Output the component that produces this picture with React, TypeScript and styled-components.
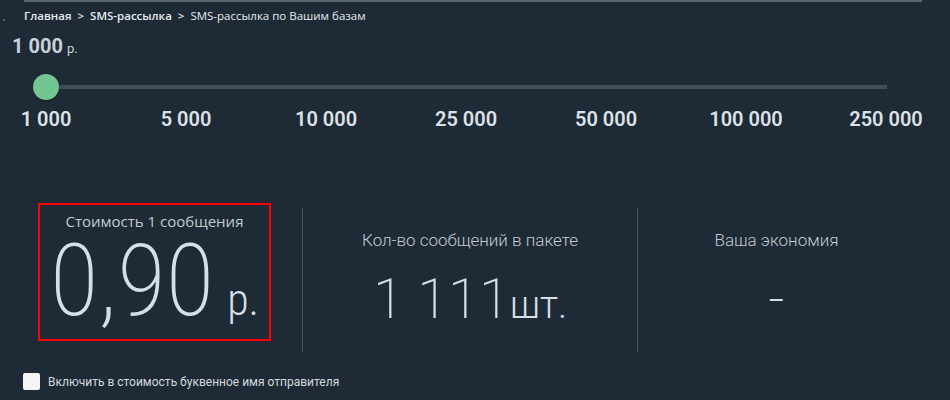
import { createGlobalStyle } from 'styled-components'
import styled from 'styled-components'

const GlobalStyle = createGlobalStyle`
  html, body {
    margin: 0;
    padding: 0;
    background: #1e2a36;
    overflow: hidden;
  }
  body {
    font-family: Roboto, "Liberation Sans", sans-serif;
    color: #d3dae1;
  }
`

const ticks = ['1 000', '5 000', '10 000', '25 000', '50 000', '100 000', '250 000']

export default function App() {
  return (
    <>
      <GlobalStyle />
      <Page>
        <TopRule />
        <Breadcrumbs>
          <Crumb $bold>Главная</Crumb>
          <Sep>&gt;</Sep>
          <Crumb $bold>SMS-рассылка</Crumb>
          <Sep>&gt;</Sep>
          <Crumb>SMS-рассылка по Вашим базам</Crumb>
        </Breadcrumbs>

        <Calculator>
          <Mark>ˊ</Mark>
          <CurrentValue>
            1 000<small>р.</small>
          </CurrentValue>

          <Slider>
            <Track />
            <Thumb style={{ left: 0 }} />
          </Slider>

          <Ticks>
            {ticks.map((t) => (
              <Tick key={t}>
                <span>{t}</span>
              </Tick>
            ))}
          </Ticks>
        </Calculator>

        <Stats>
          <Stat>
            <Highlight>
              <StatTitle>Стоимость 1 сообщения</StatTitle>
              <BigValue $size={100} $stretch={87} $offset={0}>
                0,90<Unit $gap={13} $size={44}>р.</Unit>
              </BigValue>
            </Highlight>
          </Stat>
          <Stat $divided>
            <StatTitle $condensed>Кол-во сообщений в пакете</StatTitle>
            <BigValue $size={56} $stretch={91} $offset={21}>
              1 111<Unit $gap={0} $size={38}>шт.</Unit>
            </BigValue>
          </Stat>
          <Stat $divided>
            <StatTitle $condensed>Ваша экономия</StatTitle>
            <BigValue $size={56} $stretch={91} $offset={21}>
              -
            </BigValue>
          </Stat>
        </Stats>

        <SenderOption>
          <Checkbox type="checkbox" />
          <span>Включить в стоимость буквенное имя отправителя</span>
        </SenderOption>
      </Page>
    </>
  )
}

const Page = styled.div`
  padding: 0 28px 0 24px;
`

const TopRule = styled.div`
  height: 2px;
  background: #5b6570;
`

const Breadcrumbs = styled.div`
  display: flex;
  align-items: center;
  gap: 6px;
  margin-top: 6px;
  font-family: "Open Sans", sans-serif;
  font-size: 11.5px;
  line-height: 16px;
  color: #e6eaee;
`

const Crumb = styled.span<{ $bold?: boolean }>`
  font-weight: ${(p) => (p.$bold ? 600 : 400)};
`

const Sep = styled.span`
  font-weight: 600;
`

const Calculator = styled.div`
  position: relative;
  margin-top: 10px;
`

const Mark = styled.span`
  position: absolute;
  left: -22px;
  top: -15px;
  font-size: 10px;
  color: #c8cfd6;
`

const CurrentValue = styled.div`
  margin-left: -12px;
  font-size: 20px;
  font-weight: 700;
  line-height: 24px;
  color: #c9d1d8;

  small {
    margin-left: 4px;
    font-size: 13px;
    font-weight: 400;
  }
`

const Slider = styled.div`
  position: relative;
  height: 26px;
  margin: 13px 35px 0 9px;
  display: flex;
  align-items: center;
`

const Track = styled.div`
  flex: 1;
  height: 4px;
  margin-left: 13px;
  background: #3e4d5a;
`

const Thumb = styled.div`
  position: absolute;
  top: 0;
  width: 26px;
  height: 26px;
  border-radius: 50%;
  background: #74c690;
  box-shadow: 0 1px 2px rgba(0, 0, 0, 0.35);
`

const Ticks = styled.div`
  display: flex;
  justify-content: space-between;
  margin: 8px 36px 0 22px;
  height: 22px;
  align-items: center;
`

const Tick = styled.div`
  width: 0;
  display: flex;
  justify-content: center;

  span {
    white-space: nowrap;
    font-size: 20px;
    font-weight: 600;
    color: #dce1e6;
  }
`

const Stats = styled.div`
  display: grid;
  grid-template-columns: 278px 335px 278px;
  margin-top: 78px;
  height: 144px;
`

const Stat = styled.div<{ $divided?: boolean }>`
  display: flex;
  flex-direction: column;
  align-items: ${(p) => (p.$divided ? 'center' : 'flex-start')};
  border-left: ${(p) => (p.$divided ? '1px solid #455563' : 'none')};
  padding-top: ${(p) => (p.$divided ? 22 : 0)}px;
`

const Highlight = styled.div`
  margin: -5px 0 0 14px;
  width: 233px;
  height: 138px;
  box-sizing: border-box;
  border: 2px solid #ff0000;
  display: flex;
  flex-direction: column;
  align-items: center;
  padding-top: 6px;
`

const StatTitle = styled.div<{ $condensed?: boolean }>`
  font-family: ${(p) => (p.$condensed ? 'Roboto' : '"Open Sans"')}, sans-serif;
  font-weight: ${(p) => (p.$condensed ? 300 : 400)};
  font-stretch: ${(p) => (p.$condensed ? '93%' : '100%')};
  font-size: ${(p) => (p.$condensed ? 17 : 15)}px;
  line-height: 20px;
  color: #c3cad1;
`

const BigValue = styled.div<{ $size: number; $stretch: number; $offset?: number }>`
  font-size: ${(p) => p.$size}px;
  font-weight: 200;
  font-stretch: ${(p) => p.$stretch}%;
  line-height: 1;
  color: #d6dee6;
  margin-top: ${(p) => p.$offset ?? 3}px;
  white-space: nowrap;
`

const Unit = styled.span<{ $gap: number; $size: number }>`
  margin-left: ${(p) => p.$gap}px;
  font-size: ${(p) => p.$size}px;
  font-weight: 300;
`

const SenderOption = styled.label`
  display: flex;
  align-items: center;
  gap: 8px;
  margin-top: 21px;
  margin-left: -1px;
  font-size: 12px;
  color: #d4d9de;
`

const Checkbox = styled.input`
  appearance: none;
  margin: 0;
  width: 17px;
  height: 17px;
  border-radius: 2px;
  background: #f4f4f4;
`
